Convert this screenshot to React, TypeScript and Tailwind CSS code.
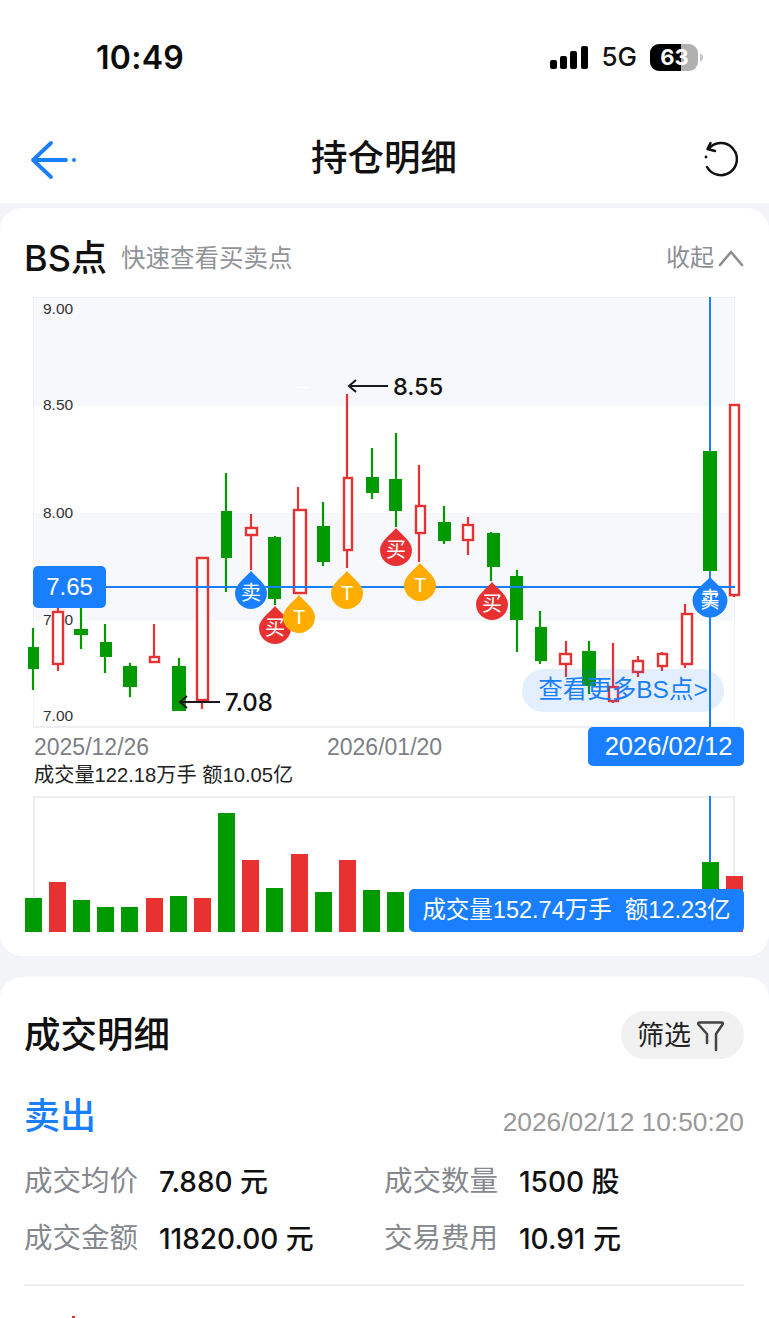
import React from "react";

const BLUE = "#1a7fff";
const RED = "#e83232";
const GREEN = "#009900";
const ORANGE = "#ffad00";
const SANS = "'Liberation Sans','Noto Sans CJK SC',sans-serif";

type C = [number, number, number, number, number, number, number, "g" | "r"];
// x0, x1, wickX, wickTop, wickBottom, bodyTop, bodyBottom, kind
const candles: C[] = [
  [28, 39, 33, 628, 690, 647, 669, "g"],
  [52, 64, 58, 608, 671, 611, 665, "r"],
  [74, 88, 81, 608, 649, 629, 635, "g"],
  [100, 112, 105, 624, 673, 642, 657, "g"],
  [123, 137, 130, 663, 697, 666, 687, "g"],
  [149, 160, 154, 624, 663, 656, 663, "r"],
  [172, 186, 179, 658, 711, 666, 711, "g"],
  [196, 209, 202, 557, 709, 557, 701, "r"],
  [221, 232, 226, 473, 592, 511, 558, "g"],
  [245, 258, 251, 514, 570, 527, 536, "r"],
  [268, 281, 275, 536, 605, 537, 599, "g"],
  [293, 307, 298, 487, 594, 509, 594, "r"],
  [317, 330, 323, 502, 566, 526, 562, "g"],
  [343, 353, 347, 394, 568, 477, 551, "r"],
  [366, 379, 372, 448, 499, 477, 493, "g"],
  [389, 402, 396, 433, 527, 479, 511, "g"],
  [415, 426, 419, 465, 562, 505, 534, "r"],
  [438, 451, 444, 506, 544, 522, 541, "g"],
  [462, 474, 468, 517, 555, 524, 541, "r"],
  [487, 500, 491, 532, 581, 533, 567, "g"],
  [510, 523, 517, 570, 652, 576, 620, "g"],
  [535, 547, 540, 611, 664, 627, 661, "g"],
  [559, 572, 566, 641, 677, 653, 665, "r"],
  [582, 596, 589, 641, 694, 651, 686, "g"],
  [608, 619, 613, 643, 703, 686, 702, "r"],
  [632, 644, 638, 656, 677, 660, 673, "r"],
  [657, 668, 662, 652, 671, 653, 667, "r"],
  [681, 693, 685, 604, 668, 613, 665, "r"],
  [703, 717, 710, 451, 571, 451, 571, "g"],
  [729, 740, 734, 404, 597, 404, 596, "r"],
];

const markers: [number, number, number, string, string][] = [
  [251, 593, 16, BLUE, "卖"],
  [275, 628, 16, RED, "买"],
  [299, 617, 16, ORANGE, "T"],
  [347, 593, 16, ORANGE, "T"],
  [396, 550, 16, RED, "买"],
  [420, 585, 16, ORANGE, "T"],
  [492, 604, 16, RED, "买"],
];

const vols: [number, number, "g" | "r"][] = [
  [25, 898, "g"], [49, 882, "r"], [73, 900, "g"], [97, 907, "g"], [121, 907, "g"], [146, 898, "r"],
  [170, 896, "g"], [194, 898, "r"], [218, 813, "g"], [242, 860, "r"], [266, 888, "g"], [291, 854, "r"],
  [315, 892, "g"], [339, 860, "r"], [363, 890, "g"], [387, 892, "g"], [702, 862, "g"], [726, 876, "r"],
];

function dropPath(cx: number, cy: number, r: number, t: number) {
  return `M${cx} ${cy - t} C${cx + r * 0.3} ${cy - t + r * 0.38} ${cx + r} ${cy - r * 0.55} ${cx + r} ${cy} A${r} ${r} 0 1 1 ${cx - r} ${cy} C${cx - r} ${cy - r * 0.55} ${cx - r * 0.3} ${cy - t + r * 0.38} ${cx} ${cy - t} Z`;
}

function KChart() {
  return (
    <svg width={769} height={431} viewBox="0 297 769 431" fontFamily={SANS} className="block overflow-visible">
      <rect x={33} y={297} width={702} height={109} fill="#f7f8fc" />
      <rect x={33} y={513} width={702} height={108} fill="#f7f8fc" />
      <path d="M33.5 297V727M734.500 297V727M33 297.500H735" stroke="#eff0f4" strokeWidth={1} fill="none" />
      <rect x={33} y={726} width={702} height={2} fill="#eeeff3" />
      <rect x={296} y={387} width={13} height={1} fill="#ffffff" />
      {[["9.00", 309], ["8.50", 405], ["8.00", 513], ["7.50", 620], ["7.00", 716]].map(([t, y]) => (
        <text key={t as string} x={43} y={(y as number) + 4.5} fontSize={15.5} fill="#333333">{t}</text>
      ))}
      <rect x={709} y={297} width={2} height={431} fill={BLUE} />
      {candles.map(([x0, x1, wx, wt, wb, bt, bb, k], i) => {
        const col = k === "g" ? GREEN : RED;
        return (
          <g key={i}>
            <rect x={wx - 1.1} y={wt} width={2.2} height={wb - wt} fill={col} />
            {k === "g" ? (
              <rect x={x0} y={bt} width={x1 - x0} height={bb - bt} fill={col} />
            ) : (
              <rect x={x0 + 1} y={bt + 1} width={x1 - x0 - 2} height={bb - bt - 2} fill="#ffffff" stroke={col} strokeWidth={2.4} />
            )}
          </g>
        );
      })}
      <rect x={106} y={586} width={629} height={2} fill={BLUE} />
      {markers.map(([cx, cy, r, col, t], i) => (
        <g key={i}>
          <path d={dropPath(cx, cy, r, 22)} fill={col} />
          <text x={cx} y={cy + 7} fontSize={20} fill="#ffffff" textAnchor="middle">{t}</text>
        </g>
      ))}
      <path d={dropPath(710, 600, 17.5, 23)} fill={BLUE} />
      <text x={710} y={605} fontSize={19} fill="#ffffff" textAnchor="middle">卖</text>
      <text x={710} y={608} fontSize={19} fill="#ffffff" textAnchor="middle">买</text>
      <path d="M220 702H180M187 696L180 702L187 708" stroke="#1a1a1a" strokeWidth={2} fill="none" />
      <text x={225} y={711} fontSize={24} fontFamily="Inter,sans-serif" fontWeight={500} fill="#111111">7.08</text>
      <path d="M388 386H349M356 380L349 386L356 392" stroke="#1a1a1a" strokeWidth={2} fill="none" />
      <text x={393} y={395} fontSize={23.5} fontFamily="Inter,sans-serif" fontWeight={500} fill="#111111">8.55</text>
    </svg>
  );
}

function VolumeChart() {
  return (
    <svg width={769} height={136} viewBox="0 796 769 136" className="block overflow-visible">
      <path d="M34 932V797H734V932" stroke="#eceef2" strokeWidth={2} fill="none" />
      <rect x={709} y={796} width={2} height={70} fill={BLUE} />
      {vols.map(([x, y, k], i) => (
        <rect key={i} x={x} y={y} width={17} height={932 - y} fill={k === "g" ? GREEN : RED} />
      ))}
    </svg>
  );
}

function Row({ a, av, b, bv }: { a: string; av: string; b: string; bv: string }) {
  return (
    <div className="flex h-[57px] items-center">
      <div className="flex w-[360px] items-center">
        <span className="w-[135px] text-[28.500px] text-[#85888d]">{a}</span>
        <span className="text-[28px] font-medium text-[#111111]">{av}</span>
      </div>
      <div className="flex items-center">
        <span className="w-[135px] text-[28.500px] text-[#85888d]">{b}</span>
        <span className="text-[28px] font-medium text-[#111111]">{bv}</span>
      </div>
    </div>
  );
}

export default function App() {
  return (
    <div className="relative flex h-[1318px] w-[769px] flex-col overflow-hidden bg-[#f2f4f8] font-['Inter','Noto_Sans_CJK_SC',sans-serif] text-[#111111]">
      {/* status bar */}
      <div className="flex h-[115px] shrink-0 items-start bg-white pt-[39px]">
        <div className="ml-[96px] text-[32px] font-semibold leading-[38px] tracking-[0.3px] text-[#0b0b0b]">10:49</div>
        <div className="ml-auto mr-[67px] -mt-[1px] flex h-[38px] items-center">
          <svg width={38} height={24} viewBox="0 0 38 24" className="mt-[1px] text-black">
            <rect x={0} y={14} width={7} height={9} rx={2} fill="currentColor" />
            <rect x={10} y={10} width={7} height={13} rx={2} fill="currentColor" />
            <rect x={20} y={5} width={7} height={18} rx={2} fill="currentColor" />
            <rect x={31} y={0} width={7} height={23} rx={2} fill="currentColor" />
          </svg>
          <span className="ml-[13px] text-[26px] font-medium leading-none text-[#111111]">5G</span>
          <div className="relative ml-[13px] h-[27px] w-[52px]">
            <svg width={53} height={27} viewBox="0 0 53 27" className="block">
              <rect width={48} height={27} rx={9} fill="#b0b0b0" />
              <path d="M9 0H31V27H9A9 9 0 0 1 0 18V9A9 9 0 0 1 9 0Z" fill="#000000" />
              <path d="M50 9C52 10 53 12 53 13.500C53 15 52 17 50 18Z" fill="#c4c4c4" />
            </svg>
            <span className="absolute left-0 top-0 flex h-[27px] w-[48px] items-center justify-center pl-[1px] text-[22px] font-bold leading-none text-white">63</span>
          </div>
        </div>
      </div>

      {/* nav */}
      <div className="flex h-[88px] shrink-0 items-center bg-white pb-[2px] pl-[30px] pr-[31px]">
        <div className="flex w-[48px] items-center">
          <svg width={48} height={40} viewBox="0 0 48 40" className="mt-[4px] text-[#1a7fff]">
            <path d="M21 3L3 20L21 37M3 20H36" stroke="currentColor" strokeWidth={3.8} strokeLinecap="round" strokeLinejoin="round" fill="none" />
            <circle cx={44} cy={20} r={2} fill="currentColor" />
          </svg>
        </div>
        <div className="flex flex-1 justify-center text-[36.500px] font-medium leading-none text-[#111111]">持仓明细</div>
        <div className="flex w-[48px] justify-end">
          <svg width={34} height={36} viewBox="0 0 34 36" className="mt-[2px] text-[#111111]">
            <path d="M4.500 8A16 16 0 1 1 3 26M6.500 2L3.500 8L11 10" stroke="currentColor" strokeWidth={2.5} strokeLinecap="round" strokeLinejoin="round" fill="none" />
            <circle cx={2} cy={16} r={1.400} fill="currentColor" />
          </svg>
        </div>
      </div>

      {/* BS card */}
      <div className="mt-[5px] h-[748px] shrink-0 rounded-[22px] bg-white">
        <div className="flex h-[88px] items-center pl-[24px] pr-[25px] pt-[12px]">
          <span className="text-[36px] font-medium leading-none text-[#111111]">BS点</span>
          <span className="ml-[14px] text-[24.500px] leading-none text-[#909398]">快速查看买卖点</span>
          <span className="ml-auto text-[24px] leading-none text-[#8b8e93]">收起</span>
          <svg width={26} height={18} viewBox="0 0 26 18" className="ml-[4px] text-[#8b8e93]">
            <path d="M2 16L13 3L24 16" stroke="currentColor" strokeWidth={2.6} fill="none" strokeLinecap="round" strokeLinejoin="round" />
          </svg>
        </div>
        <div className="relative mt-[1px] font-['Liberation_Sans','Noto_Sans_CJK_SC',sans-serif]">
          <KChart />
          <div className="absolute left-[33px] top-[269px] flex h-[42px] w-[73px] items-center justify-center rounded-[5px] bg-[#1a7fff] text-[24px] text-white">7.65</div>
          <div className="absolute left-[522px] top-[372px] flex h-[43px] w-[202px] items-center justify-center rounded-[22px] bg-[#1a7fff]/12 text-[24.500px] leading-none text-[#1a7fff]">查看更多BS点&gt;</div>
        </div>
        <div className="relative h-[38px] font-['Liberation_Sans','Noto_Sans_CJK_SC',sans-serif]">
          <div className="flex h-[38px] items-center pl-[34px] text-[23px] leading-none text-[#7c7f85]">
            <span className="w-[293px]">2025/12/26</span>
            <span>2026/01/20</span>
          </div>
          <div className="absolute -top-[1px] left-[588px] flex h-[39px] w-[156px] items-center justify-center rounded-[5px] bg-[#1a7fff] pl-[5px] text-[25.500px] text-white">2026/02/12</div>
        </div>
        <div className="-mt-[1px] h-[31px] whitespace-pre pl-[34px] font-['Liberation_Sans','Noto_Sans_CJK_SC',sans-serif] text-[20.200px] leading-[20px] text-[#222222]">成交量122.18万手 额10.05亿</div>
        <div className="relative font-['Liberation_Sans','Noto_Sans_CJK_SC',sans-serif]">
          <VolumeChart />
          <div className="absolute left-[409px] top-[93px] flex h-[43px] w-[335px] items-center justify-center whitespace-pre rounded-[5px] bg-[#1a7fff] text-[23.500px] leading-none text-white">成交量152.74万手  额12.23亿</div>
        </div>
      </div>

      {/* deals card */}
      <div className="mt-[21px] flex-1 rounded-t-[22px] bg-white px-[24px]">
        <div className="flex items-center justify-between pt-[34px]">
          <span className="text-[36.500px] font-medium leading-[48px] text-[#111111]">成交明细</span>
          <div className="mr-[1px] flex h-[48px] w-[123px] items-center rounded-[24px] bg-[#f1f1f2] pl-[16px]">
            <span className="text-[27px] leading-none text-[#222222]">筛选</span>
            <svg width={30} height={32} viewBox="0 0 30 32" className="ml-[4px] mt-[2px] text-[#444444]">
              <path d="M12 14V23M21 14V30M12 14L3.500 4.500Q2.500 2.500 4.500 2.500H26.500Q28.500 2.500 27.500 4.500L21 14" stroke="currentColor" strokeWidth={2.5} fill="none" strokeLinejoin="round" strokeLinecap="round" />
            </svg>
          </div>
        </div>
        <div className="mt-[33px] flex h-[48px] items-center justify-between">
          <span className="text-[36px] font-medium leading-none text-[#1a7fff]">卖出</span>
          <span className="mr-[1px] mt-[12px] font-['Liberation_Sans',sans-serif] text-[26.300px] leading-none text-[#999999]">2026/02/12 10:50:20</span>
        </div>
        <div className="mt-[13px]">
          <Row a="成交均价" av="7.880 元" b="成交数量" bv="1500 股" />
          <Row a="成交金额" av="11820.00 元" b="交易费用" bv="10.91 元" />
        </div>
        <div className="mt-[17px] h-[2px] w-[720px] bg-[#eeeeef]" />
      </div>
      <div className="absolute left-[72px] top-[1316px] h-[2px] w-[3px] bg-[#e83232]" />
    </div>
  );
}
